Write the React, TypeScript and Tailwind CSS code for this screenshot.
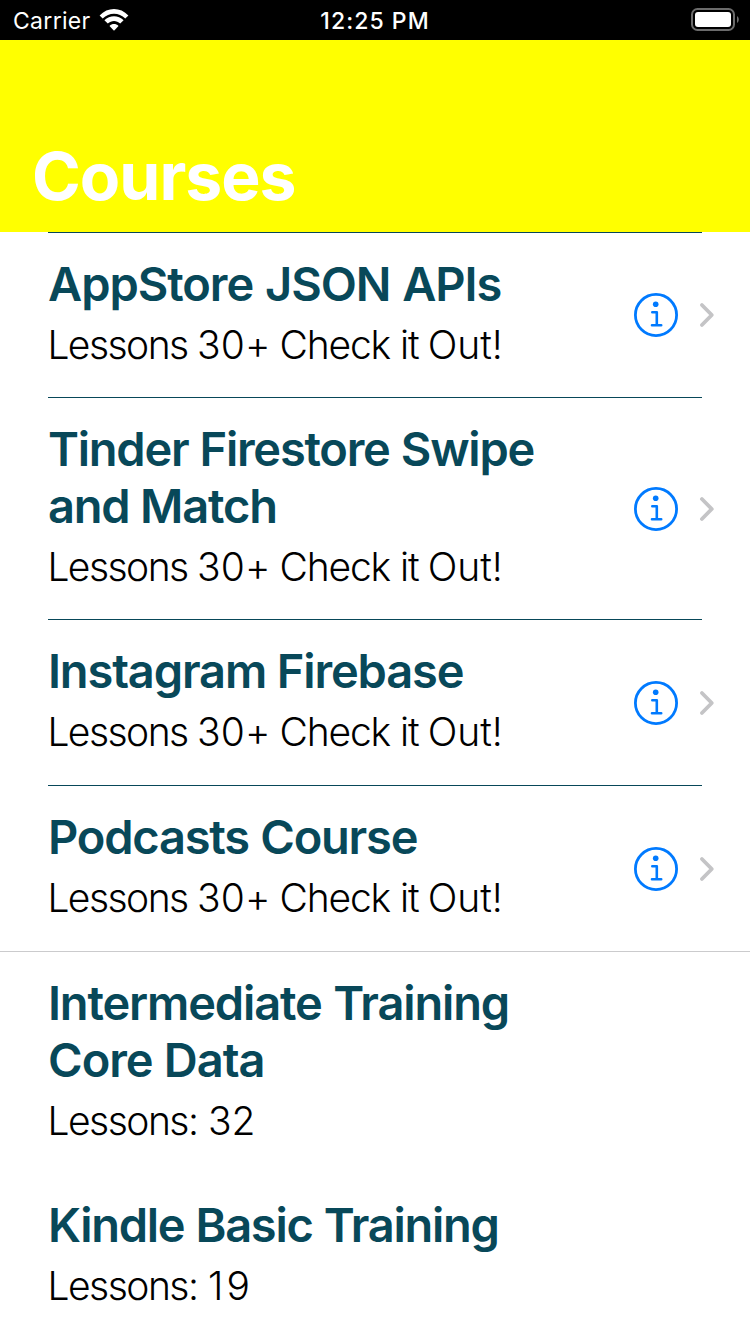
import React from "react";

type Run = { text: string; style: string };
type Course = { lines: Run[]; detail: Run[]; row: string; rule: string; accessory: boolean };

const inset = "mx-12 border-[#084859]";
const hidden = "mx-12 border-transparent";

const pitch: Run[] = [
  { text: "Lessons", style: "tracking-[-1.55px]" },
  { text: " 30+", style: "tracking-[0.2px] [word-spacing:-1.8px]" },
  { text: " Check", style: "tracking-[-1.2px] [word-spacing:-1px]" },
  { text: " it", style: "tracking-[-1px]" },
  { text: " Out!", style: "tracking-[0px] [word-spacing:-2px]" },
];

const courses: Course[] = [
  { lines: [{ text: "AppStore JSON APIs", style: "tracking-[-1.05px] [word-spacing:1px]" }], detail: pitch, row: "h-[165px]", rule: inset, accessory: true },
  { lines: [{ text: "Tinder Firestore Swipe", style: "tracking-[-1.25px] [word-spacing:0.6px]" }, { text: "and Match", style: "tracking-[-1.2px]" }], detail: pitch, row: "h-[222px]", rule: inset, accessory: true },
  { lines: [{ text: "Instagram Firebase", style: "tracking-[-1.14px]" }], detail: pitch, row: "h-[166px]", rule: inset, accessory: true },
  { lines: [{ text: "Podcasts Course", style: "tracking-[-1.22px] [word-spacing:0.8px]" }], detail: pitch, row: "h-[166px]", rule: inset, accessory: true },
  { lines: [{ text: "Intermediate Training", style: "tracking-[-1.15px] [word-spacing:0.8px]" }, { text: "Core Data", style: "tracking-[-1px] [word-spacing:0.3px]" }], detail: [{ text: "Lessons:", style: "tracking-[-1.5px]" }, { text: " 32", style: "tracking-[0px] [word-spacing:-0.5px]" }], row: "h-[222px]", rule: "border-[#cbcbcd]", accessory: false },
  { lines: [{ text: "Kindle Basic Training", style: "tracking-[-1.28px] [word-spacing:0.6px]" }], detail: [{ text: "Lessons:", style: "tracking-[-1.5px]" }, { text: " 19", style: "tracking-[3px] [word-spacing:-3.4px]" }], row: "h-[161px]", rule: hidden, accessory: false },
];

function WifiIcon() {
  return (
    <svg className="ml-2 h-6 w-[30px]" viewBox="0 0 30 24" fill="white">
      <path d="M0.6 7.4C8.6-1.2 21.4-1.2 29.4 7.4L26.3 10.5C20 4 10 4 3.7 10.5Z" />
      <path d="M5.4 12.3C10.8 6.9 19.2 6.9 24.6 12.3L21.2 15.6C17.6 12 12.4 12 8.8 15.6Z" />
      <path d="M10.5 17.9C13 15.5 17 15.5 19.5 17.9L15 22.8Z" />
    </svg>
  );
}

function BatteryIcon() {
  return (
    <svg className="h-6 w-[50px]" viewBox="0 0 50 24" fill="none">
      <rect x="2" y="1" width="42" height="21" rx="5.5" stroke="#6b6b6b" strokeWidth="2" />
      <rect x="5" y="4" width="36" height="15" rx="3" fill="white" />
      <path d="M47 8C49.4 9.4 49.4 13.6 47 15Z" fill="#6b6b6b" />
    </svg>
  );
}

function Accessory() {
  return (
    <div className="flex items-center">
      <svg className="h-11 w-11" viewBox="0 0 44 44" fill="none" stroke="#007aff">
        <circle cx="22" cy="22" r="20.6" strokeWidth="2.8" />
        <circle cx="21.7" cy="11.3" r="2.8" fill="#007aff" stroke="none" />
        <path d="M18.3 19.3H22.8V32.3M18 32.3H27.2" strokeWidth="2.6" strokeLinecap="round" strokeLinejoin="round" />
      </svg>
      <svg className="ml-5 h-7 w-[18px]" viewBox="0 0 18 28" fill="none" stroke="#c4c4c6" strokeWidth="3.8" strokeLinecap="round" strokeLinejoin="round">
        <path d="M3.9 4L13.8 14L3.9 24" />
      </svg>
    </div>
  );
}

function StatusBar() {
  return (
    <div className="grid h-10 grid-cols-3 items-center bg-black text-[23px] text-white">
      <div className="flex items-center pl-[13px]">
        <span className="pt-0.5 tracking-[0.3px]">Carrier</span>
        <WifiIcon />
      </div>
      <div className="pt-0.5 text-center font-medium tracking-[1.05px]">12:25 PM</div>
      <div className="flex justify-end pr-[10px]">
        <BatteryIcon />
      </div>
    </div>
  );
}

export default function App() {
  return (
    <div className="h-[1334px] w-[750px] overflow-hidden bg-white font-[Inter,sans-serif]">
      <StatusBar />
      <header className="flex h-48 items-end bg-[#ffff00] pl-8">
        <h1 className="pb-4 text-[66px] font-bold leading-[80px] tracking-[-1px] text-white">Courses</h1>
      </header>
      <main>
        {courses.map((c) => (
          <section key={c.lines[0].text} className={`flex flex-col ${c.row}`}>
            <div className={`border-t ${c.rule}`} />
            <div className="flex flex-1 items-center justify-between pl-12 pr-[34px]">
              <div className="h-full pt-[22px]">
                <h2 className="text-[47px] font-semibold leading-[57px] text-[#084859]">
                  {c.lines.map((l) => (
                    <span key={l.text} className={`block w-max ${l.style}`}>{l.text}</span>
                  ))}
                </h2>
                <p className="-ml-[0.6px] w-max whitespace-pre text-[39px] font-light leading-[65px] text-black">
                  {c.detail.map((d) => (
                    <span key={d.text} className={d.style}>{d.text}</span>
                  ))}
                </p>
              </div>
              {c.accessory && <Accessory />}
            </div>
          </section>
        ))}
      </main>
    </div>
  );
}
